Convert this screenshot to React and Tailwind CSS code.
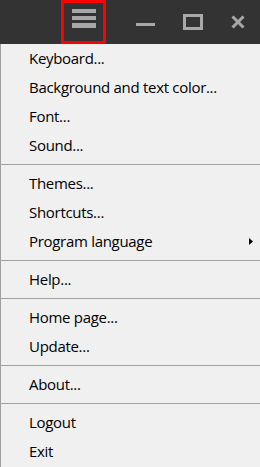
import React from "react";

const groups = [
  ["Keyboard...", "Background and text color...", "Font...", "Sound..."],
  ["Themes...", "Shortcuts...", "Program language"],
  ["Help..."],
  ["Home page...", "Update..."],
  ["About..."],
  ["Logout", "Exit"],
];

function MenuItem({ label }) {
  const hasSub = label === "Program language";
  return (
    <div className="flex h-[29px] items-center justify-between pl-[28px] pr-[7px]">
      <span className="leading-[27px] text-[15px] tracking-[-0.3px] text-black">{label}</span>
      {hasSub && (
        <svg width="4" height="7" viewBox="0 0 4 7">
          <polygon points="0,0 4,3.5 0,7" fill="#000" />
        </svg>
      )}
    </div>
  );
}

function Separator() {
  return (
    <div className="py-[4px]">
      <div className="h-px bg-[#a0a0a0]" />
    </div>
  );
}

export default function App() {
  return (
    <div
      className="flex h-[467px] w-[260px] flex-col bg-[#f0f0f0]"
      style={{ fontFamily: '"Open Sans", "Noto Sans", sans-serif' }}
    >
      {/* title bar */}
      <div className="flex h-[44px] shrink-0 items-stretch bg-[#333333]">
        <div className="w-[61px]" />
        <div className="flex w-[45px] flex-col items-center gap-[3px] border-[3px] border-[#ff0000] pt-[6px]">
          <div className="h-[4px] w-[24px] bg-[#a8a8a8]" />
          <div className="h-[4px] w-[24px] bg-[#a8a8a8]" />
          <div className="h-[5px] w-[24px] bg-[#a8a8a8]" />
        </div>
        <div className="w-[16px]" />
        <div className="flex w-[47px] items-end justify-center pb-[18px]">
          <div className="h-[3px] w-[19px] bg-[#a8a8a8]" />
        </div>
        <div className="flex w-[47px] items-center justify-center">
          <div className="h-[16px] w-[20px] border-[3px] border-[#a8a8a8]" />
        </div>
        <div className="flex flex-1 items-center justify-center">
          <svg width="14" height="14" viewBox="0 0 14 14">
            <path d="M1.5 1.5 L12.5 12.5 M12.5 1.5 L1.5 12.5" stroke="#a8a8a8" strokeWidth="3" />
          </svg>
        </div>
      </div>

      {/* menu */}
      <div className="flex-1 border-l border-[#a0a0a0]">
        {groups.map((items, gi) => (
          <div key={gi}>
            {gi > 0 && <Separator />}
            {items.map((label) => (
              <MenuItem key={label} label={label} />
            ))}
          </div>
        ))}
      </div>
    </div>
  );
}
